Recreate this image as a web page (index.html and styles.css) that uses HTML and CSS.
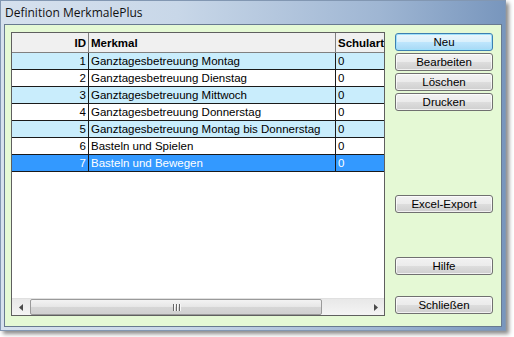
FILE: index.html
```html
<!DOCTYPE html>
<html>
<head>
<meta charset="utf-8">
<link rel="stylesheet" href="styles.css">
</head>
<body>
<div class="window">
  <div class="titlebar"><span class="title">Definition MerkmalePlus</span></div>
  <div class="client">
    <div class="grid">
      <div class="grid-view">
        <table class="table">
          <thead>
            <tr><th class="c-id">ID</th><th class="c-mk">Merkmal</th><th class="c-sa">Schulart</th></tr>
          </thead>
          <tbody>
            <tr class="alt"><td class="c-id">1</td><td>Ganztagesbetreuung Montag</td><td>0</td></tr>
            <tr><td class="c-id">2</td><td>Ganztagesbetreuung Dienstag</td><td>0</td></tr>
            <tr class="alt"><td class="c-id">3</td><td>Ganztagesbetreuung Mittwoch</td><td>0</td></tr>
            <tr><td class="c-id">4</td><td>Ganztagesbetreuung Donnerstag</td><td>0</td></tr>
            <tr class="alt"><td class="c-id">5</td><td>Ganztagesbetreuung Montag bis Donnerstag</td><td>0</td></tr>
            <tr><td class="c-id">6</td><td>Basteln und Spielen</td><td>0</td></tr>
            <tr class="sel"><td class="c-id">7</td><td>Basteln und Bewegen</td><td>0</td></tr>
          </tbody>
        </table>
      </div>
      <div class="hscroll">
        <div class="arrow arrow-left"><svg width="4" height="7" viewBox="0 0 4 7"><path d="M4 0 L0 3.5 L4 7 Z" fill="#4a4a4a"/></svg></div>
        <div class="track">
          <div class="thumb"><span class="grip"></span><span class="grip"></span><span class="grip"></span></div>
        </div>
        <div class="arrow arrow-right"><svg width="4" height="7" viewBox="0 0 4 7"><path d="M0 0 L4 3.5 L0 7 Z" fill="#4a4a4a"/></svg></div>
      </div>
    </div>
    <div class="buttons">
      <button class="btn btn-default">Neu</button>
      <button class="btn">Bearbeiten</button>
      <button class="btn">Löschen</button>
      <button class="btn">Drucken</button>
      <button class="btn btn-excel">Excel-Export</button>
      <button class="btn btn-help">Hilfe</button>
      <button class="btn btn-close">Schließen</button>
    </div>
  </div>
</div>
</body>
</html>
```
FILE: styles.css
```css
html, body {
  margin: 0;
  padding: 0;
  background: #ffffff;
}
body {
  width: 514px;
  height: 337px;
  overflow: hidden;
}
.window {
  width: 506px;
  height: 331px;
  box-sizing: border-box;
  background: linear-gradient(to right, #d6e1ee 0%, #c8d7e8 35%, #9fb6d3 75%, #7896bd 100%);
  border: 1px solid #8297b2;
  box-shadow: 3px 3px 4px rgba(0,0,0,0.45);
  display: flex;
  flex-direction: column;
  padding: 0 3px 3px 3px;
}
.titlebar {
  height: 23px;
  display: flex;
  align-items: center;
  padding-left: 1px;
}
.title {
  font-family: "Open Sans", "Noto Sans", sans-serif;
  font-size: 12px;
  color: #111;
}
.client {
  flex: 1;
  background: #e5f9d5;
  border: 1px solid #687a90;
  display: flex;
  padding: 7px 0 0 6px;
  gap: 10px;
}
.grid {
  width: 374px;
  height: 284px;
  box-sizing: border-box;
  border: 1px solid #5f5f5f;
  background: #ffffff;
  display: flex;
  flex-direction: column;
  overflow: hidden;
}
.grid-view {
  flex: 1;
  overflow: hidden;
}
.table {
  border-collapse: collapse;
  table-layout: fixed;
  width: 400px;
  font-family: "Liberation Sans", Arial, sans-serif;
  font-size: 11.5px;
}
.table th {
  height: 19px;
  background: #f0f0f0;
  font-weight: bold;
  text-align: left;
  padding: 0 2px;
  border-right: 1px solid #808080;
  border-bottom: 1px solid #808080;
  color: #000;
}
.table th.c-id, .table td.c-id {
  text-align: right;
}
.c-id { width: 72px; }
.c-mk { width: 242px; }
.c-sa { width: 82px; }
.table td {
  height: 16px;
  padding: 0 2px;
  border-right: 1px solid #1a1a1a;
  border-bottom: 1px solid #1a1a1a;
  white-space: nowrap;
  overflow: hidden;
  color: #000;
}
.table tr.alt td { background: #c9edfc; }
.table tr.sel td { background: #3399ff; color: #ffffff; }
.hscroll {
  height: 16px;
  display: flex;
  background: linear-gradient(to bottom, #e8e8e8, #f4f4f4);
  border-top: 1px solid #e0e0e0;
}
.arrow {
  width: 17px;
  display: flex;
  align-items: center;
  justify-content: center;
}
.track {
  flex: 1;
  display: flex;
  padding-right: 44px;
}
.thumb {
  flex: 1;
  margin: 0 1px;
  border: 1px solid #9a9a9a;
  border-radius: 2px;
  background: linear-gradient(to bottom, #f3f3f3 0%, #e6e6e6 50%, #d6d6d6 51%, #d0d0d0 100%);
  display: flex;
  align-items: center;
  justify-content: center;
  gap: 2px;
}
.grip {
  width: 1px;
  height: 7px;
  background: #666;
  box-shadow: 1px 0 0 #f8f8f8;
}
.buttons {
  width: 98px;
  display: flex;
  flex-direction: column;
  gap: 2px;
  padding-top: 1px;
}
.btn {
  height: 18px;
  box-sizing: border-box;
  border: 1px solid #707070;
  border-radius: 3px;
  background: linear-gradient(to bottom, #f2f2f2 0%, #ebebeb 50%, #dddddd 51%, #cfcfcf 100%);
  font-family: "Liberation Sans", Arial, sans-serif;
  font-size: 11.5px;
  font-weight: normal;
  color: #000;
  padding: 0;
  box-shadow: inset 0 0 0 1px rgba(255,255,255,0.7);
}
.btn-default {
  border-color: #3c7fb1;
  background: linear-gradient(to bottom, #eaf6fd 0%, #d9f0fc 50%, #bee6fd 51%, #a7d9f5 100%);
  box-shadow: inset 0 0 0 1px #9fe0fb;
}
.btn-excel { margin-top: 82px; }
.btn-help { margin-top: 42px; }
.btn-close { margin-top: 19px; }
```
